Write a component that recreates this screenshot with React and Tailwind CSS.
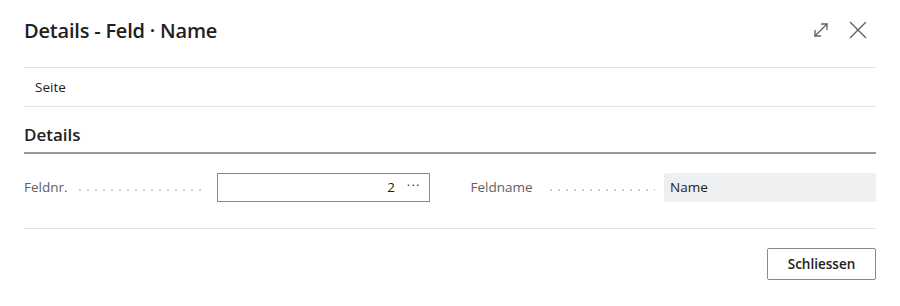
import React from "react";

function ExpandIcon() {
  return (
    <svg width="16" height="16" viewBox="0 0 16 16" fill="none" stroke="#5f5f5f" strokeWidth="1.3" strokeLinecap="round" strokeLinejoin="round">
      <path d="M2 14 L14 2" />
      <path d="M8.5 2 H14 V7.5" />
      <path d="M2 8.5 V14 H7.5" />
    </svg>
  );
}

function CloseIcon() {
  return (
    <svg width="18" height="18" viewBox="0 0 18 18" fill="none" stroke="#5f5f5f" strokeWidth="1.4" strokeLinecap="round">
      <path d="M1.5 1.5 L16.5 16.5" />
      <path d="M16.5 1.5 L1.5 16.5" />
    </svg>
  );
}

function Dots({ className }) {
  return (
    <span
      className={
        "flex-1 h-[2px] translate-y-[2px] bg-[radial-gradient(circle,#cdcdcd_0.7px,transparent_1px)] bg-[length:8px_2px] bg-repeat-x " +
        className
      }
    ></span>
  );
}

export default function App() {
  return (
    <div className="w-[900px] h-[306px] bg-white text-[#212121]" style={{ fontFamily: '"Open Sans", "Noto Sans", sans-serif' }}>
      <div className="px-6">
        <div className="h-[68px] flex items-center justify-between border-b border-[#e1e1e1]">
          <div className="text-[20px] font-semibold tracking-[-0.2px] -mt-[6px]">Details - Feld · Name</div>
          <div className="flex items-center gap-[20px] -mt-[7px] mr-[9px]">
            <ExpandIcon />
            <CloseIcon />
          </div>
        </div>
        <div className="h-[39px] flex items-center border-b border-[#e1e1e1] px-[11px] text-[13.5px]">Seite</div>
        <div className="h-[47px] flex items-end pb-[5px] border-b-2 border-[#9a9a9a]">
          <div className="text-[17px] font-semibold">Details</div>
        </div>
        <div className="h-[75px] flex items-start pt-[19px] border-b border-[#e1e1e1] gap-[41px] text-[13.5px]">
          <div className="flex-1 flex items-center">
            <span className="text-[#616161]">Feldnr.</span>
            <Dots className="ml-[8px] mr-[10px]" />
            <div className="w-[213px] h-[29px] border border-[#8a8a8a] flex items-center justify-end pr-[8px]">
              <span>2</span>
              <span className="ml-[12px] text-[#444] tracking-[1px] -mt-[4px]">···</span>
            </div>
          </div>
          <div className="flex-1 flex items-center">
            <span className="text-[#616161]">Feldname</span>
            <Dots className="ml-[14px] mr-[9px]" />
            <div className="w-[212px] h-[29px] bg-[#eeeff0] rounded-[2px] flex items-center px-[6px]">Name</div>
          </div>
        </div>
        <div className="flex justify-end pt-[19px]">
          <button className="w-[109px] h-[32px] border border-[#8a8a8a] rounded-[2px] text-[13.5px] font-semibold bg-white">Schliessen</button>
        </div>
      </div>
    </div>
  );
}
